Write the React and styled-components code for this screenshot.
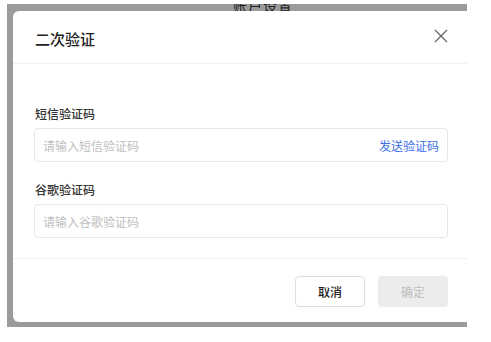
import React from 'react'
import styled, { createGlobalStyle } from 'styled-components'

const GlobalStyle = createGlobalStyle`
  html, body {
    margin: 0;
    padding: 0;
    background: #ffffff;
    font-family: "Noto Sans CJK SC", "Noto Sans", sans-serif;
  }
`

const Backdrop = styled.div`
  position: relative;
  width: 460px;
  height: 323px;
  margin: 4px 0 0 7px;
  padding: 7px 0 0 6px;
  box-sizing: border-box;
  background: #9b9b9b;
  overflow: hidden;
`

// page heading that sits under the overlay, mostly hidden by the modal
const PageTitle = styled.div`
  position: absolute;
  top: -9px;
  left: 226px;
  font-size: 14px;
  color: #1e1e1e;
  letter-spacing: 1px;
`

const Modal = styled.div`
  position: relative;
  z-index: 1;
  width: 454px;
  height: 311px;
  background: #ffffff;
  border-radius: 6px 0 0 6px;
  display: flex;
  flex-direction: column;
`

const Header = styled.div`
  height: 52px;
  display: flex;
  align-items: center;
  justify-content: space-between;
  padding: 0 19px 0 22px;
  border-bottom: 1px solid #f0f0f0;
`

const Title = styled.div`
  font-size: 15px;
  font-weight: 500;
  color: #222;
  margin-top: 2px;
`

const CloseBtn = styled.button`
  border: none;
  background: none;
  padding: 0;
  display: flex;
  cursor: pointer;
  margin-top: -2px;
`

const Body = styled.div`
  padding: 41px 19px 20px 21px;
  border-bottom: 1px solid #f0f0f0;
`

const Field = styled.div`
  & + & {
    margin-top: 19px;
  }
`

const Label = styled.div`
  font-size: 12px;
  font-weight: 500;
  line-height: 18px;
  color: #333;
  margin: 0 0 5px 1px;
`

const InputBox = styled.div`
  height: 34px;
  box-sizing: border-box;
  border: 1px solid #e6e6e6;
  border-radius: 4px;
  display: flex;
  align-items: center;
  padding: 0 8px;
`

const Input = styled.input`
  flex: 1;
  border: none;
  outline: none;
  font-family: inherit;
  font-size: 12px;
  color: #333;
  padding: 0;
  background: transparent;
  &::placeholder {
    color: #c0c0c0;
  }
`

const SendLink = styled.span`
  font-size: 12px;
  color: #3b6ee8;
  cursor: pointer;
`

const Footer = styled.div`
  display: flex;
  justify-content: flex-end;
  gap: 13px;
  padding: 17px 19px 0 0;
`

const Button = styled.button`
  width: 70px;
  height: 31px;
  border-radius: 4px;
  font-family: inherit;
  font-size: 12px;
  font-weight: ${p => (p.$primary ? 400 : 500)};
  box-sizing: border-box;
  border: ${p => (p.$primary ? 'none' : '1px solid #dedede')};
  background: ${p => (p.$primary ? '#ececec' : '#ffffff')};
  color: ${p => (p.$primary ? '#bdbdbd' : '#222')};
  cursor: ${p => (p.$primary ? 'not-allowed' : 'pointer')};
`

export default function App() {
  return (
    <>
      <GlobalStyle />
      <Backdrop>
        <PageTitle>账户设置</PageTitle>
        <Modal>
          <Header>
            <Title>二次验证</Title>
            <CloseBtn>
              <svg width="14" height="14" viewBox="0 0 14 14">
                <path d="M1 1 L13 13 M13 1 L1 13" stroke="#666" strokeWidth="1.3" fill="none" />
              </svg>
            </CloseBtn>
          </Header>
          <Body>
            <Field>
              <Label>短信验证码</Label>
              <InputBox>
                <Input placeholder="请输入短信验证码" />
                <SendLink>发送验证码</SendLink>
              </InputBox>
            </Field>
            <Field>
              <Label>谷歌验证码</Label>
              <InputBox>
                <Input placeholder="请输入谷歌验证码" />
              </InputBox>
            </Field>
          </Body>
          <Footer>
            <Button>取消</Button>
            <Button $primary disabled>确定</Button>
          </Footer>
        </Modal>
      </Backdrop>
    </>
  )
}
